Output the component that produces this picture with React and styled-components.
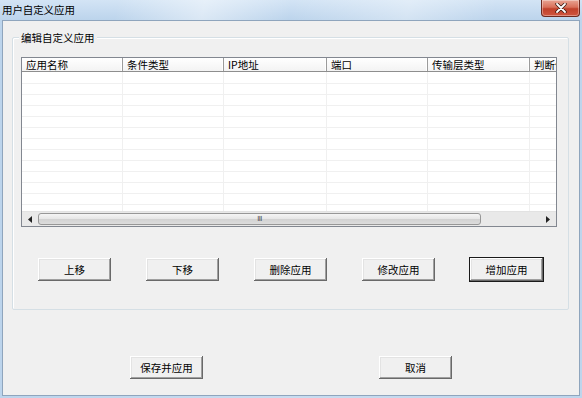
import React from 'react';
import styled, { createGlobalStyle } from 'styled-components';

const GlobalStyle = createGlobalStyle`
	html, body {
		margin: 0;
		padding: 0;
		background: #f0f0f0;
	}
	body {
		font-family: "Noto Sans CJK SC", "Liberation Sans", sans-serif;
		font-size: 10.5px;
		color: #000;
	}
`;

const columns = [
	{ name: '应用名称', width: 101 },
	{ name: '条件类型', width: 101 },
	{ name: 'IP地址', width: 103 },
	{ name: '端口', width: 101 },
	{ name: '传输层类型', width: 102 },
	{ name: '判断依据', width: 26 },
];

const rows = Array.from({ length: 13 });

const editButtons = ['上移', '下移', '删除应用', '修改应用', '增加应用'];

const App = () => {
	return (
		<>
			<GlobalStyle />
			<Window>
				<TitleBar>
					<Title>用户自定义应用</Title>
					<CloseButton>
						<svg width="12" height="10" viewBox="0 0 12 10">
							<path d="M2 1 L10 9 M10 1 L2 9" stroke="#3a1a12" strokeWidth="3.4" strokeLinecap="round" />
							<path d="M2 1 L10 9 M10 1 L2 9" stroke="#fff" strokeWidth="1.8" strokeLinecap="round" />
						</svg>
					</CloseButton>
				</TitleBar>

				<Client>
					<GroupBox>
						<GroupLabel>编辑自定义应用</GroupLabel>

						<ListView>
							<HeaderRow>
								{columns.map((col) => (
									<HeaderCell key={col.name} style={{ width: col.width }}>
										{col.name}
									</HeaderCell>
								))}
							</HeaderRow>

							<Rows>
								{rows.map((_, i) => (
									<Row key={i}>
										{columns.map((col) => (
											<Cell key={col.name} style={{ width: col.width }} />
										))}
									</Row>
								))}
							</Rows>

							<ScrollBar>
								<ArrowButton>
									<svg width="4" height="7" viewBox="0 0 4 7">
										<path d="M4 0 L0 3.5 L4 7 Z" fill="#222" />
									</svg>
								</ArrowButton>
								<Track>
									<Thumb>
										<Grip>III</Grip>
									</Thumb>
								</Track>
								<ArrowButton>
									<svg width="4" height="7" viewBox="0 0 4 7">
										<path d="M0 0 L4 3.5 L0 7 Z" fill="#222" />
									</svg>
								</ArrowButton>
							</ScrollBar>
						</ListView>

						<EditButtons>
							{editButtons.map((label) => (
								<Button key={label} $default={label === '增加应用'}>
									{label}
								</Button>
							))}
						</EditButtons>
					</GroupBox>

					<DialogButtons>
						<Button>保存并应用</Button>
						<Button>取消</Button>
					</DialogButtons>
				</Client>
			</Window>
		</>
	);
};

const Window = styled.div`
	width: 582px;
	height: 398px;
	display: flex;
	flex-direction: column;
	background: linear-gradient(90deg, #bcd4ec 0%, #c9dcf0 50%, #bed5ec 100%);
	box-sizing: border-box;
	overflow: hidden;
`;

const TitleBar = styled.div`
	position: relative;
	height: 20px;
	flex: none;
	display: flex;
	align-items: center;
	padding-left: 2px;
	background:
		linear-gradient(100deg, rgba(255,255,255,0) 20%, rgba(255,255,255,0.45) 35%, rgba(255,255,255,0) 50%, rgba(255,255,255,0.35) 70%, rgba(255,255,255,0) 85%),
		linear-gradient(180deg, #d3e4f5 0%, #bcd4ec 100%);
`;

const Title = styled.span`
	font-size: 10.5px;
	line-height: 20px;
	color: #000;
	letter-spacing: -0.1px;
`;

const CloseButton = styled.div`
	position: absolute;
	top: 0;
	right: 2px;
	width: 39px;
	height: 17px;
	box-sizing: border-box;
	border: 1px solid #6d2a1f;
	border-top: none;
	border-radius: 0 0 4px 4px;
	background: linear-gradient(180deg, #e8a493 0%, #d9705a 45%, #c0412b 55%, #d0563f 100%);
	display: flex;
	align-items: center;
	justify-content: center;
	box-shadow: inset 0 0 0 1px rgba(255,255,255,0.35);
`;

const Client = styled.div`
	flex: 1;
	margin: 0 2px 2px 2px;
	border: 1px solid #8fa5bd;
	background: #f0f0f0;
	padding: 16px 10px 0 9px;
	display: flex;
	flex-direction: column;
`;

const GroupBox = styled.div`
	position: relative;
	border: 1px solid #d5dfe5;
	box-shadow: inset 1px 1px 0 #fff;
	border-radius: 2px;
	padding: 19px 0 27px 8px;
	display: flex;
	flex-direction: column;
`;

const GroupLabel = styled.span`
	position: absolute;
	top: -8px;
	left: 6px;
	padding: 0 2px;
	background: #f0f0f0;
	font-size: 10.5px;
	line-height: 15px;
`;

const ListView = styled.div`
	width: 536px;
	height: 170px;
	box-sizing: border-box;
	border: 1px solid #828790;
	background: #fff;
	display: flex;
	flex-direction: column;
	overflow: hidden;
`;

const HeaderRow = styled.div`
	display: flex;
	height: 13px;
	flex: none;
	background: linear-gradient(180deg, #ffffff 0%, #f3f3f3 100%);
	border-bottom: 1px solid #8e8e8e;
`;

const HeaderCell = styled.div`
	flex: none;
	box-sizing: border-box;
	padding-left: 4px;
	border-right: 1px solid #9b9b9b;
	box-shadow: inset -1px 0 0 #fff;
	font-size: 10.5px;
	line-height: 13px;
	white-space: nowrap;
	overflow: hidden;

	&:last-child {
		border-right: none;
		box-shadow: none;
	}
`;

const Rows = styled.div`
	flex: 1;
	overflow: hidden;
`;

const Row = styled.div`
	display: flex;
	height: 11px;
	box-sizing: border-box;
	border-bottom: 1px solid #f0f0f0;

	&:first-child {
		height: 12px;
	}
`;

const Cell = styled.div`
	flex: none;
	box-sizing: border-box;
	border-right: 1px solid #f0f0f0;

	&:last-child {
		border-right: none;
	}
`;

const ScrollBar = styled.div`
	display: flex;
	height: 14px;
	flex: none;
	background: #e9e9e9;
	border-top: 1px solid #e2e2e2;
`;

const ArrowButton = styled.div`
	width: 16px;
	flex: none;
	display: flex;
	align-items: center;
	justify-content: center;
`;

const Track = styled.div`
	flex: 1;
	display: flex;
	padding: 1px 0;
`;

const Thumb = styled.div`
	width: 443px;
	box-sizing: border-box;
	border: 1px solid #979797;
	border-radius: 3px;
	background: linear-gradient(180deg, #f5f5f5 0%, #e6e6e6 50%, #d2d2d2 51%, #dcdcdc 100%);
	display: flex;
	align-items: center;
	justify-content: center;
`;

const Grip = styled.span`
	font-family: "DejaVu Sans", sans-serif;
	font-size: 7px;
	line-height: 8px;
	color: #444;
	letter-spacing: -0.5px;
`;

const EditButtons = styled.div`
	display: flex;
	gap: 33px;
	margin-top: 30px;
	padding-left: 16px;
`;

const DialogButtons = styled.div`
	display: flex;
	gap: 174px;
	margin-top: 45px;
	padding-left: 117px;
`;

const Button = styled.div`
	width: 75px;
	height: 25px;
	box-sizing: border-box;
	display: flex;
	align-items: center;
	justify-content: center;
	background: #f0f0f0;
	font-size: 10.5px;
	color: #000;
	border: 1px solid ${(p) => (p.$default ? '#1a1a1a' : 'transparent')};
	box-shadow:
		inset -1px -1px 0 #696969,
		inset 1px 1px 0 #ffffff,
		inset -2px -2px 0 #a0a0a0,
		inset 2px 2px 0 #e3e3e3;
`;

export default App;
